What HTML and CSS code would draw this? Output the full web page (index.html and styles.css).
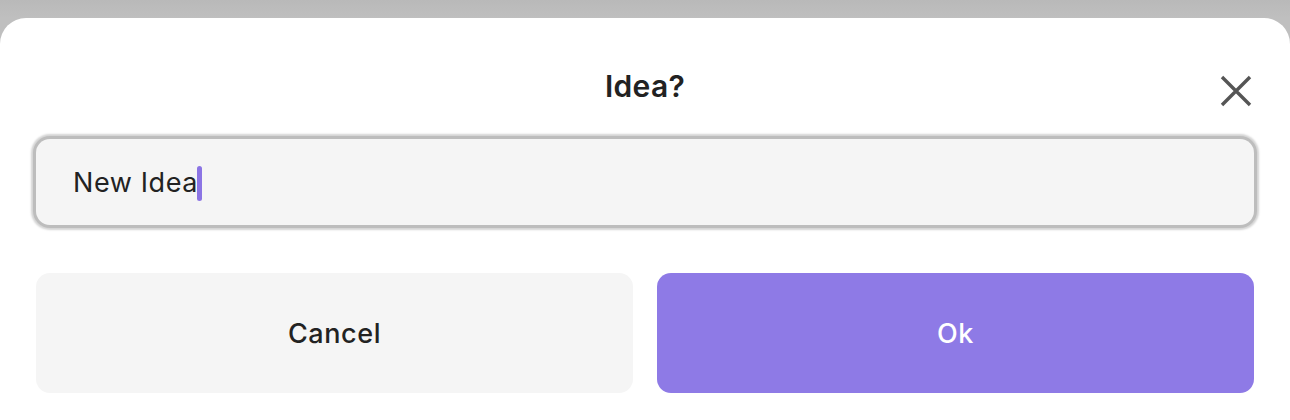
FILE: index.html
```html
<!DOCTYPE html>
<html>
<head>
<meta charset="utf-8">
<link rel="stylesheet" href="styles.css">
</head>
<body>
<div class="modal">
  <div class="header">
    <span></span>
    <h1 class="title">Idea?</h1>
    <button class="close" aria-label="Close">
      <svg width="32" height="32" viewBox="0 0 32 32"><path d="M2 2 L30 30 M30 2 L2 30" stroke="#555" stroke-width="3.4" stroke-linecap="butt" fill="none"/></svg>
    </button>
  </div>
  <div class="field">
    <span class="value">New Idea</span><span class="caret"></span>
  </div>
  <div class="actions">
    <button class="btn cancel">Cancel</button>
    <button class="btn ok">Ok</button>
  </div>
</div>
</body>
</html>
```
FILE: styles.css
```css
html, body {
  margin: 0;
  padding: 0;
}
body {
  background: linear-gradient(#b9b9b9, #bfbfbf 18px);
  height: 420px;
  overflow: hidden;
  font-family: Inter, "Liberation Sans", sans-serif;
}
.modal {
  margin-top: 18px;
  height: 402px;
  background: #ffffff;
  border-radius: 26px 26px 0 0;
  padding: 0 36px;
}
.header {
  display: grid;
  grid-template-columns: 1fr auto 1fr;
  padding-top: 48px;
  height: 40px;
}
.title {
  margin: 0;
  font-size: 30px;
  font-weight: 600;
  line-height: 40px;
  color: #222;
  letter-spacing: 0.3px;
}
.close {
  justify-self: end;
  margin-top: 9px;
  margin-right: 2px;
  width: 32px;
  height: 32px;
  padding: 0;
  border: 0;
  background: none;
  display: flex;
}
.field {
  margin-top: 33px;
  height: 86px;
  background: #f5f5f5;
  border-radius: 14px;
  box-shadow: 0 0 0 3px #bdbdbd, 0 0 2px 5px #d4d4d4;
  display: flex;
  align-items: center;
  padding-left: 37px;
  font-size: 27px;
  color: #222;
  letter-spacing: 0.6px;
}
.caret {
  display: inline-block;
  width: 5px;
  height: 35px;
  border-radius: 3px;
  background: #8b74e4;
  margin-left: -1px;
  margin-top: 2px;
}
.actions {
  display: grid;
  grid-template-columns: 1fr 1fr;
  gap: 24px;
  margin-top: 48px;
}
.btn {
  height: 120px;
  border: 0;
  border-radius: 14px;
  font-family: Inter, "Liberation Sans", sans-serif;
  font-size: 27px;
  font-weight: 500;
  letter-spacing: 0.6px;
}
.cancel {
  background: #f5f5f5;
  color: #222;
}
.ok {
  background: #8e7ae6;
  color: #ffffff;
}
```
